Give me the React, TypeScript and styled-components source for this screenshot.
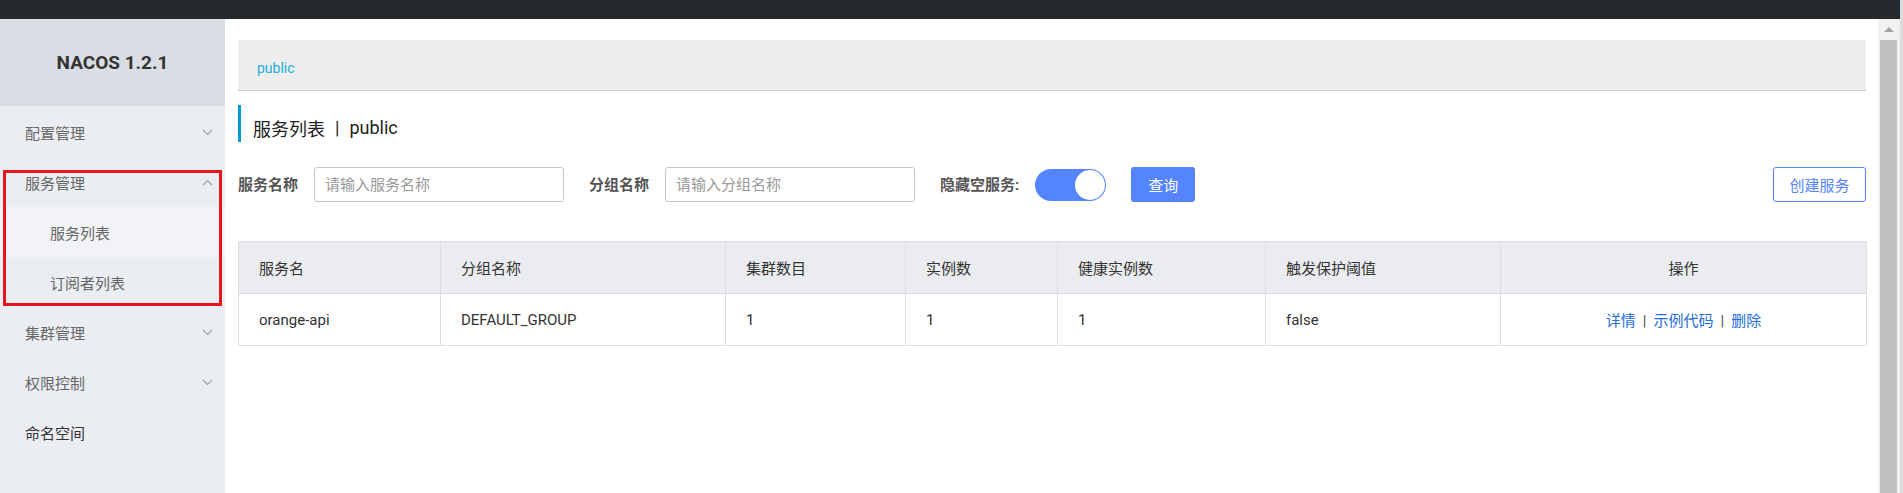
// REACT //
import React from 'react';

// COMPONENTS //
import styled, { createGlobalStyle } from 'styled-components';

interface Service {
    name: string;
    group: string;
    clusters: number;
    instances: number;
    healthy: number;
    threshold: string;
}

const services: Service[] = [
    {
        name: 'orange-api',
        group: 'DEFAULT_GROUP',
        clusters: 1,
        instances: 1,
        healthy: 1,
        threshold: 'false',
    },
];

const columns = [
    { title: '服务名', width: 202 },
    { title: '分组名称', width: 285 },
    { title: '集群数目', width: 180 },
    { title: '实例数', width: 152 },
    { title: '健康实例数', width: 208 },
    { title: '触发保护阈值', width: 235 },
    { title: '操作', width: 366, center: true },
];

const Chevron: React.FC<{ up?: boolean }> = ({ up }) => (
    <svg width="11" height="7" viewBox="0 0 11 7">
        <polyline
            points={up ? '1,6 5.5,1.5 10,6' : '1,1 5.5,5.5 10,1'}
            fill="none"
            stroke="#9a9ea6"
            strokeWidth="1.1"
        />
    </svg>
);

const App: React.FC = () => {
    return (
        <>
            <GlobalStyle />
            <Frame>
                <TopBar />
                <Body>
                    <Sidebar>
                        <Logo>NACOS 1.2.1</Logo>
                        <Menu>
                            <MenuItem>
                                配置管理
                                <Chevron />
                            </MenuItem>
                            <MenuItem>
                                服务管理
                                <Chevron up />
                            </MenuItem>
                            <SubItem active>服务列表</SubItem>
                            <SubItem>订阅者列表</SubItem>
                            <MenuItem>
                                集群管理
                                <Chevron />
                            </MenuItem>
                            <MenuItem>
                                权限控制
                                <Chevron />
                            </MenuItem>
                            <MenuItem strong>命名空间</MenuItem>
                        </Menu>
                        <Highlight />
                    </Sidebar>
                    <Main>
                        <NamespaceBar>
                            <NamespaceLink>public</NamespaceLink>
                        </NamespaceBar>
                        <PageTitle>
                            服务列表 <TitleSep>|</TitleSep> public
                        </PageTitle>
                        <SearchRow>
                            <FormItem>
                                <Label>服务名称</Label>
                                <Input placeholder="请输入服务名称" />
                            </FormItem>
                            <FormItem>
                                <Label>分组名称</Label>
                                <Input placeholder="请输入分组名称" />
                            </FormItem>
                            <FormItem>
                                <Label>隐藏空服务:</Label>
                                <Switch>
                                    <Knob />
                                </Switch>
                            </FormItem>
                            <PrimaryButton>查询</PrimaryButton>
                            <Spacer />
                            <OutlineButton>创建服务</OutlineButton>
                        </SearchRow>
                        <Table>
                            <colgroup>
                                {columns.map(c => (
                                    <col key={c.title} style={{ width: c.width }} />
                                ))}
                            </colgroup>
                            <thead>
                                <tr>
                                    {columns.map(c => (
                                        <Th key={c.title} center={c.center}>
                                            {c.title}
                                        </Th>
                                    ))}
                                </tr>
                            </thead>
                            <tbody>
                                {services.map(s => (
                                    <tr key={s.name}>
                                        <Td>{s.name}</Td>
                                        <Td>{s.group}</Td>
                                        <Td>{s.clusters}</Td>
                                        <Td>{s.instances}</Td>
                                        <Td>{s.healthy}</Td>
                                        <Td>{s.threshold}</Td>
                                        <Td center>
                                            <Link>详情</Link>
                                            <LinkSep>|</LinkSep>
                                            <Link>示例代码</Link>
                                            <LinkSep>|</LinkSep>
                                            <Link>删除</Link>
                                        </Td>
                                    </tr>
                                ))}
                            </tbody>
                        </Table>
                    </Main>
                    <ScrollTrack>
                        <ScrollUp />
                        <ScrollThumb />
                    </ScrollTrack>
                </Body>
            </Frame>
        </>
    );
};

// STYLES //
const GlobalStyle = createGlobalStyle`
    html, body {
        margin: 0;
        padding: 0;
        background: #dcdcdc;
        overflow: hidden;
    }
    body {
        font-family: Roboto, "Noto Sans CJK SC", sans-serif;
        font-size: 14px;
        color: #333;
    }
    * {
        box-sizing: border-box;
    }
`;

const Frame = styled.div`
    width: calc(100vw - 3px);
    height: 100vh;
    display: flex;
    flex-direction: column;
    background: #fff;
`;

const TopBar = styled.div`
    height: 19px;
    flex: none;
    background: #24292e;
`;

const Body = styled.div`
    flex: 1;
    display: flex;
    min-height: 0;
`;

const Sidebar = styled.div`
    position: relative;
    width: 225px;
    flex: none;
    background: #eaedf1;
`;

const Logo = styled.div`
    height: 87px;
    display: flex;
    align-items: center;
    justify-content: center;
    background: #d9dde4;
    font-size: 19px;
    font-weight: 700;
    color: #333;
`;

const Menu = styled.div`
    padding-top: 1px;
`;

const MenuItem = styled.div<{ strong?: boolean }>`
    height: 50px;
    display: flex;
    align-items: center;
    justify-content: space-between;
    padding: 0 12px 0 25px;
    font-size: 15px;
    color: ${p => (p.strong ? '#333' : '#666')};
`;

const SubItem = styled.div<{ active?: boolean }>`
    height: 50px;
    display: flex;
    align-items: center;
    padding-left: 50px;
    font-size: 15px;
    color: #666;
    background: ${p => (p.active ? '#f2f3f7' : 'transparent')};
`;

const Highlight = styled.div`
    position: absolute;
    left: 3px;
    top: 151px;
    width: 219px;
    height: 136px;
    border: 3px solid #e8141d;
    pointer-events: none;
`;

const Main = styled.div`
    flex: 1;
    min-width: 0;
    overflow: hidden;
    padding: 21px 12px 0 13px;
`;

const ScrollTrack = styled.div`
    width: 22px;
    flex: none;
    display: flex;
    flex-direction: column;
    background: #f1f1f1;
`;

const ScrollUp = styled.div`
    height: 21px;
    flex: none;
    display: flex;
    align-items: center;
    justify-content: center;

    &::before {
        content: '';
        border-left: 5px solid transparent;
        border-right: 5px solid transparent;
        border-bottom: 5px solid #a3a3a3;
    }
`;

const ScrollThumb = styled.div`
    flex: 1;
    margin: 0 3px 0 2px;
    background: #c1c1c1;
`;

const NamespaceBar = styled.div`
    height: 51px;
    display: flex;
    align-items: center;
    padding: 5px 0 0 19px;
    background: #eeeeee;
    border-bottom: 1px solid #cccccc;
`;

const NamespaceLink = styled.span`
    font-size: 14px;
    color: #1cb1d8;
`;

const PageTitle = styled.div`
    margin-top: 14px;
    height: 37px;
    display: flex;
    align-items: center;
    padding: 8px 0 0 12px;
    border-left: 3px solid #009bd5;
    font-size: 18px;
    color: #222;
`;

const TitleSep = styled.span`
    margin: 0 10px;
`;

const SearchRow = styled.div`
    margin-top: 25px;
    display: flex;
    align-items: center;
`;

const FormItem = styled.div`
    display: flex;
    align-items: center;
    margin-right: 25px;
`;

const Label = styled.label`
    font-size: 15px;
    font-weight: 700;
    color: #555;
    margin-right: 16px;
    margin-top: -2px;
`;

const Input = styled.input`
    width: 250px;
    height: 35px;
    padding: 0 10px;
    border: 1px solid #c4c6cf;
    border-radius: 3px;
    font-family: inherit;
    font-size: 15px;
    color: #333;
    outline: none;

    &::placeholder {
        color: #999;
    }
`;

const Switch = styled.div`
    width: 71px;
    height: 32px;
    display: flex;
    justify-content: flex-end;
    align-items: center;
    padding: 1px;
    border-radius: 16px;
    background: #5584ff;
`;

const Knob = styled.div`
    width: 30px;
    height: 30px;
    border-radius: 50%;
    background: #fff;
`;

const PrimaryButton = styled.button`
    height: 35px;
    padding: 0 17px;
    border: none;
    border-radius: 3px;
    background: #5584ff;
    color: #fff;
    font-family: inherit;
    font-size: 15px;
`;

const Spacer = styled.div`
    flex: 1;
`;

const OutlineButton = styled.button`
    width: 93px;
    height: 35px;
    border: 1px solid #5584ff;
    border-radius: 3px;
    background: #fff;
    color: #5584ff;
    font-family: inherit;
    font-size: 15px;
`;

const Table = styled.table`
    margin-top: 39px;
    width: 100%;
    border-collapse: collapse;
    table-layout: fixed;
`;

const Th = styled.th<{ center?: boolean }>`
    height: 52px;
    padding: 0 20px;
    background: #ebecf0;
    border: 1px solid #dcdee3;
    text-align: ${p => (p.center ? 'center' : 'left')};
    font-weight: 400;
    font-size: 15px;
    color: #333;
`;

const Td = styled.td<{ center?: boolean }>`
    height: 52px;
    padding: 0 20px;
    border: 1px solid #dcdee3;
    text-align: ${p => (p.center ? 'center' : 'left')};
    font-size: 15px;
    color: #333;
`;

const Link = styled.a`
    color: #236ed9;
    cursor: pointer;
`;

const LinkSep = styled.span`
    margin: 0 7px;
    color: #444;
`;

export default App;
